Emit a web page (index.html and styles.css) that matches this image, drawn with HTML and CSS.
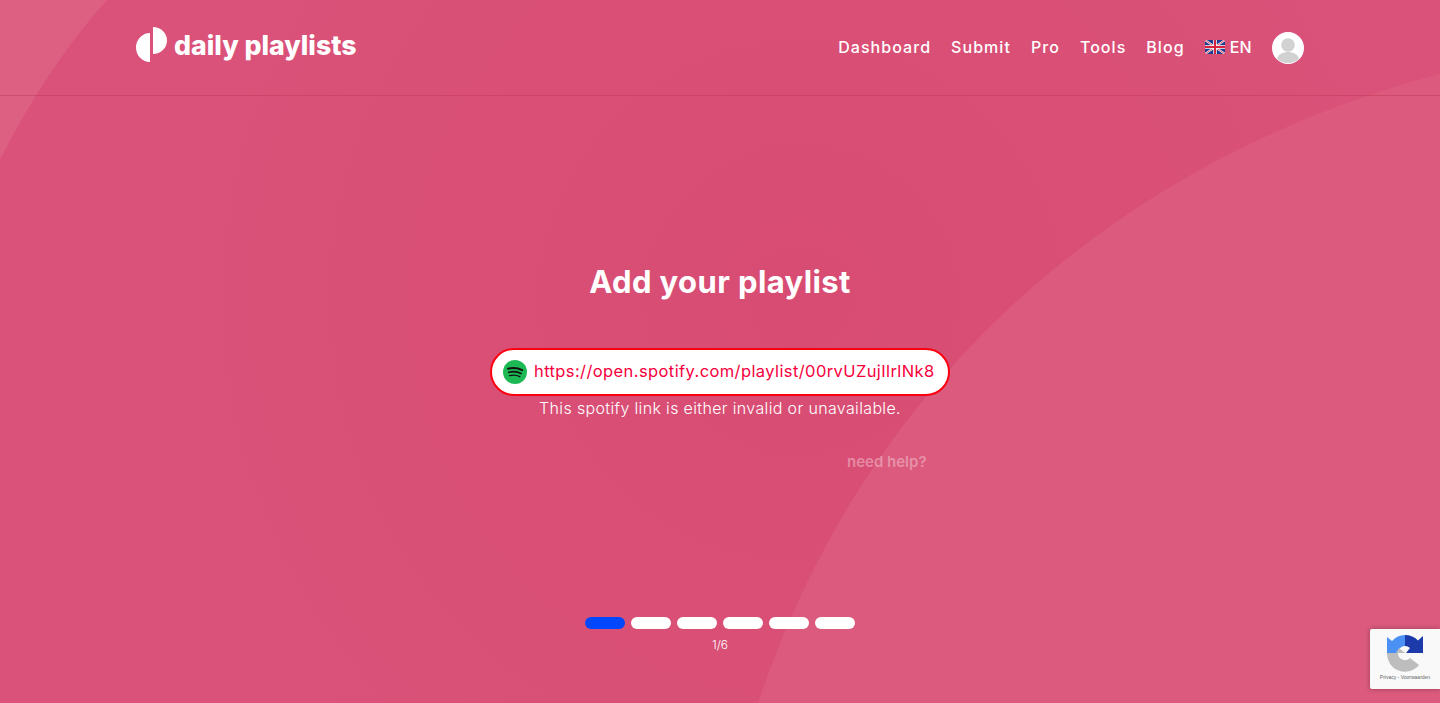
FILE: index.html

```html
<!DOCTYPE html>
<html lang="en">
<head>
  <meta charset="UTF-8" />
  <meta name="viewport" content="width=device-width, initial-scale=1.0"/>
  <title>Daily Playlists</title>
  <link rel="stylesheet" href="styles.css">
</head>
<body>
  <svg class="bg-shapes" viewBox="0 0 1440 703" preserveAspectRatio="none" aria-hidden="true">
    <path d="M0 0H107C64 48 28 104 0 160Z" fill="#dd5f81"/>
    <path d="M1440 74C1145 151 873 358 758 703H1440Z" fill="#db5a7d"/>
  </svg>

  <header class="topbar">
    <div class="topbar-inner">
      <a class="logo" href="#">
        <svg class="logo-mark" viewBox="0 0 31 36" width="31" height="36">
          <path d="M14 7A14 14.500 0 0 0 14 36Z" fill="#fff"/>
          <path d="M17 1A14 13.500 0 0 1 17 28Z" fill="#fff"/>
        </svg>
        <span>daily playlists</span>
      </a>
      <nav class="nav">
        <a href="#">Dashboard</a>
        <a href="#">Submit</a>
        <a href="#">Pro</a>
        <a href="#">Tools</a>
        <a href="#">Blog</a>
        <a class="lang" href="#">
          <svg viewBox="0 0 20 14" width="20" height="14">
            <rect width="20" height="14" fill="#1f3a8f"/>
            <path d="M0 0L20 14M20 0L0 14" stroke="#fff" stroke-width="2"/>
            <path d="M0 0L20 14M20 0L0 14" stroke="#d8233f" stroke-width="0.800"/>
            <path d="M10 0V14M0 7H20" stroke="#fff" stroke-width="3.500"/>
            <path d="M10 0V14M0 7H20" stroke="#d8233f" stroke-width="2"/>
          </svg>
          EN
        </a>
        <span class="avatar">
          <svg viewBox="0 0 32 32" width="32" height="32">
            <circle cx="16" cy="16" r="16" fill="#fff"/>
            <circle cx="16" cy="13" r="6.800" fill="#d2d2d2"/>
            <path d="M5 27C6 22 11 20 16 20C21 20 26 22 27 27C24 29.500 20 31 16 31C12 31 8 29.500 5 27Z" fill="#d2d2d2"/>
          </svg>
        </span>
      </nav>
    </div>
  </header>

  <main class="step">
    <h1>Add your playlist</h1>
    <div class="link-field">
      <svg class="spotify" viewBox="0 0 24 24" width="24" height="24">
        <circle cx="12" cy="12" r="12" fill="#1db954"/>
        <path d="M5 8.800C9.500 7.500 15 7.900 19.200 10.200" stroke="#111" stroke-width="2" stroke-linecap="round" fill="none"/>
        <path d="M5.800 12.300C9.800 11.200 14.600 11.600 18 13.500" stroke="#111" stroke-width="1.700" stroke-linecap="round" fill="none"/>
        <path d="M6.500 15.600C10 14.800 13.900 15 16.800 16.700" stroke="#111" stroke-width="1.400" stroke-linecap="round" fill="none"/>
      </svg>
      <span class="link-value">https://open.spotify.com/playlist/00rvUZujIlrlNk8</span>
    </div>
    <p class="error">This spotify link is either invalid or unavailable.</p>
    <a class="help" href="#">need help?</a>
  </main>

  <footer class="progress">
    <div class="pills">
      <span class="pill active"></span>
      <span class="pill"></span>
      <span class="pill"></span>
      <span class="pill"></span>
      <span class="pill"></span>
      <span class="pill"></span>
    </div>
    <div class="count">1/6</div>
  </footer>

  <div class="recaptcha">
    <svg viewBox="0 0 36 38" width="36" height="38">
      <path d="M0 18H11A7 7 0 0 0 23 23L32 30A18 18 0 0 1 0 18Z" fill="#bdbdbd"/>
      <path d="M18 0V11A7 7 0 0 0 11 18H0V2L5 6A18 18 0 0 1 18 0Z" fill="#4a90f5"/>
      <path d="M18 0A18 18 0 0 1 31 5.500L36 1V18H19L23 13A7 7 0 0 0 18 11Z" fill="#1c3aa9"/>
      <path d="M12 13L18 18H9Z" fill="#bdbdbd"/>
    </svg>
    <span>Privacy - Voorwaarden</span>
  </div>
</body>
</html>
```

FILE: styles.css

```css
* {
  box-sizing: border-box;
}
html, body {
  height: 100%;
}
body {
  margin: 0;
  background: radial-gradient(circle at 800px 300px, #d84c73, #da5279 70%);
  color: #fff;
  font-family: 'Inter', 'Noto Sans', sans-serif;
  overflow: hidden;
  position: relative;
  display: flex;
  flex-direction: column;
}
a {
  color: inherit;
  text-decoration: none;
}
.bg-shapes {
  position: absolute;
  inset: 0;
  width: 100%;
  height: 100%;
}
.topbar {
  position: relative;
  height: 96px;
  border-bottom: 1px solid rgba(190, 50, 85, 0.45);
}
.topbar-inner {
  width: 1168px;
  margin: 0 auto;
  height: 95px;
  display: flex;
  align-items: center;
  justify-content: space-between;
}
.logo {
  display: flex;
  align-items: center;
  gap: 7px;
  font-weight: 800;
  font-size: 26.700px;
  letter-spacing: 0;
}
.logo span {
  margin-top: -5px;
}
.logo-mark {
  display: block;
  margin-top: -8px;
}
.nav {
  display: flex;
  align-items: center;
  gap: 20px;
  font-size: 16px;
  font-weight: 500;
  letter-spacing: 1.050px;
}
.nav a {
  margin-top: -2px;
}
.lang {
  display: flex;
  align-items: center;
  gap: 5px;
  letter-spacing: 0.300px;
}
.avatar {
  display: block;
  height: 32px;
}
.step {
  position: relative;
  display: flex;
  flex-direction: column;
  align-items: center;
}
h1 {
  margin: 167px 0 0;
  font-size: 31px;
  line-height: 38px;
  font-weight: 700;
  letter-spacing: 0.4px;
}
.link-field {
  margin-top: 47px;
  width: 460px;
  height: 48px;
  border: 2px solid #ff0010;
  border-radius: 24px;
  background: #fff;
  display: flex;
  align-items: center;
  gap: 7px;
  padding-left: 11px;
}
.spotify {
  flex: none;
}
.link-value {
  color: #f5003d;
  font-size: 16.500px;
  white-space: nowrap;
  letter-spacing: 0.400px;
  margin-top: -2px;
}
.error {
  margin: 0;
  font-size: 16px;
  line-height: 24px;
  font-weight: 300;
  letter-spacing: 0.350px;
}
.help {
  align-self: flex-start;
  margin: 31px 0 0 847px;
  font-size: 15px;
  line-height: 22px;
  font-weight: 600;
  color: rgba(255, 255, 255, 0.35);
}
.progress {
  position: relative;
  margin-top: 144px;
  display: flex;
  flex-direction: column;
  align-items: center;
}
.pills {
  display: flex;
  gap: 6px;
}
.pill {
  width: 40px;
  height: 12px;
  border-radius: 6px;
  background: #fff;
}
.pill.active {
  background: #0048ff;
}
.count {
  margin-top: 8px;
  font-size: 12px;
  line-height: 16px;
  font-weight: 300;
}
.recaptcha {
  position: absolute;
  right: 0;
  bottom: 14px;
  width: 70px;
  height: 60px;
  background: #f9f9f9;
  border-radius: 2px 0 0 2px;
  box-shadow: 0 0 5px rgba(0, 0, 0, 0.3);
  display: flex;
  flex-direction: column;
  align-items: center;
  padding-top: 6px;
  color: #666;
  font-family: 'Liberation Sans', sans-serif;
  font-size: 5px;
  white-space: nowrap;
}
.recaptcha span {
  margin-top: 1px;
}
```
